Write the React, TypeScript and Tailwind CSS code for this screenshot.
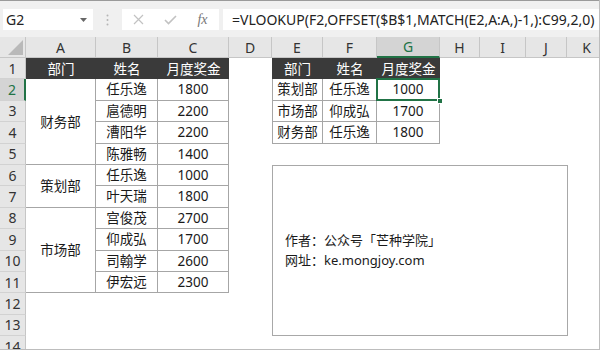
import React from 'react';

type Kind = 'empty' | 'head' | 'body' | 'sel';
interface Cell {
  text?: string;
  kind: Kind;
  span?: 2 | 4;
  edge?: boolean;
}

const COLS = ['A', 'B', 'C', 'D', 'E', 'F', 'G', 'H', 'I', 'J', 'K'];
const FONT = "font-['Noto_Sans','Noto_Sans_CJK_SC',sans-serif]";

const e = (n: number): Cell[] => Array.from({ length: n }, () => ({ kind: 'empty' as Kind }));
const b = (text: string, extra: Partial<Cell> = {}): Cell => ({ text, kind: 'body', ...extra });
const h = (text: string): Cell => ({ text, kind: 'head' });

const ROWS: Cell[][] = [
  [h('部门'), h('姓名'), h('月度奖金'), ...e(1), h('部门'), h('姓名'), h('月度奖金'), ...e(4)],
  [b('财务部', { span: 4 }), b('任乐逸'), b('1800'), ...e(1), b('策划部', { edge: true }), b('任乐逸'), { text: '1000', kind: 'sel' }, ...e(4)],
  [b('扈德明'), b('2200'), ...e(1), b('市场部', { edge: true }), b('仰成弘'), b('1700'), ...e(4)],
  [b('漕阳华'), b('2200'), ...e(1), b('财务部', { edge: true }), b('任乐逸'), b('1800'), ...e(4)],
  [b('陈雅畅'), b('1400'), ...e(8)],
  [b('策划部', { span: 2 }), b('任乐逸'), b('1000'), ...e(8)],
  [b('叶天瑞'), b('1800'), ...e(8)],
  [b('市场部', { span: 4 }), b('宫俊茂'), b('2700'), ...e(8)],
  [b('仰成弘'), b('1700'), ...e(8)],
  [b('司翰学'), b('2600'), ...e(8)],
  [b('伊宏远'), b('2300'), ...e(8)],
  e(11),
  e(11),
  e(11),
];

function GridCell({ cell }: { cell: Cell }) {
  const span = cell.span === 4 ? 'row-span-4' : cell.span === 2 ? 'row-span-2' : '';
  if (cell.kind === 'empty') return <div className="bg-white" />;
  if (cell.kind === 'head') {
    return (
      <div className="flex items-center justify-center bg-[#3a3a3a] text-[13.5px] text-white">
        {cell.text}
      </div>
    );
  }
  if (cell.kind === 'sel') {
    return (
      <div className="relative flex items-center justify-center border-b border-r border-[#a6a6a6] bg-white text-[13.5px] text-[#1a1a1a]">
        {cell.text}
        <div className="absolute -left-px -top-px -right-px -bottom-px border-2 border-[#217346]" />
        <div className="absolute -bottom-[4px] -right-[4px] h-[6px] w-[6px] border border-white bg-[#217346]" />
      </div>
    );
  }
  return (
    <div
      className={`flex items-center justify-center border-b border-r border-[#a6a6a6] bg-white text-[13.5px] text-[#1a1a1a] ${span} ${
        cell.edge ? 'border-l' : ''
      }`}
    >
      {cell.text}
    </div>
  );
}

function FormulaBar() {
  return (
    <div className="flex h-[37px] items-center gap-0 border-t border-[#9a9a9a] bg-[#f0f0f0] pt-[1px]">
      {/* Name box */}
      <div className="ml-[3px] flex h-[21px] w-[90px] items-center justify-between bg-white pl-[3px] pr-[6px] text-[14px] text-[#222]">
        <span>G2</span>
        <svg width="7" height="4" viewBox="0 0 7 4">
          <polygon points="0,0 7,0 3.5,4" fill="#666" />
        </svg>
      </div>
      {/* Separator */}
      <div className="flex w-[29px] justify-center">
        <svg width="3" height="12" viewBox="0 0 3 12">
          <circle cx="1.5" cy="1.5" r="1" fill="#b5b5b5" />
          <circle cx="1.5" cy="6" r="1" fill="#b5b5b5" />
          <circle cx="1.5" cy="10.5" r="1" fill="#b5b5b5" />
        </svg>
      </div>
      {/* Buttons */}
      <div className="flex h-[21px] w-[97px] items-center bg-white">
        <div className="flex w-[32px] justify-center">
          <svg width="11" height="11" viewBox="0 0 11 11">
            <path d="M1 1 L10 10 M10 1 L1 10" stroke="#c2c2c2" strokeWidth="1.2" />
          </svg>
        </div>
        <div className="flex w-[32px] justify-center">
          <svg width="13" height="10" viewBox="0 0 13 10">
            <path d="M1 5 L4.5 8.5 L12 1" stroke="#c2c2c2" strokeWidth="1.6" fill="none" />
          </svg>
        </div>
        <div className="flex w-[33px] justify-center font-['Liberation_Serif',serif] text-[14px] italic text-[#777]">
          fx
        </div>
      </div>
      {/* Formula input */}
      <div className="ml-[4px] flex h-[21px] flex-1 items-center bg-white pl-[9px] text-[14px] text-[#222]">
        =VLOOKUP(F2,OFFSET($B$1,MATCH(E2,A:A,)-1,):C99,2,0)
      </div>
    </div>
  );
}

export default function App() {
  return (
    <div className={`relative h-[350px] w-[600px] overflow-hidden border-b border-r border-[#bdbdbd] bg-white ${FONT}`}>
      <FormulaBar />
      <div className="grid grid-cols-[26px_70px_62px_71px_43px_51px_54px_63px_40px_46px_41px_40px] grid-rows-[21px] auto-rows-[21.4px]">
        {/* corner */}
        <div className="flex items-end justify-end border-b border-r border-[#c6c6c6] bg-[#e6e6e6] pb-[1px] pr-[1px]">
          <svg width="17" height="16" viewBox="0 0 17 16">
            <polygon points="16,0 16,15 1,15" fill="#b9b9b9" />
          </svg>
        </div>
        {COLS.map((c) => (
          <div
            key={c}
            className={`flex items-center justify-center border-r text-[14px] ${
              c === 'G'
                ? 'border-b-2 border-r-[#c6c6c6] border-b-[#217346] bg-[#d4d4d4] text-[#217346]'
                : 'border-b border-[#c6c6c6] bg-[#e6e6e6] text-[#333]'
            }`}
          >
            {c}
          </div>
        ))}
        {ROWS.map((row, i) => (
          <React.Fragment key={i}>
            <div
              className={`flex items-center justify-center border-b border-b-[#d2d2d2] text-[14px] ${
                i === 1
                  ? 'border-r-2 border-r-[#217346] bg-[#d4d4d4] text-[#217346]'
                  : 'border-r border-r-[#c6c6c6] bg-[#e6e6e6] text-[#333]'
              }`}
            >
              {i + 1}
            </div>
            {row.map((cell, j) => (
              <GridCell key={j} cell={cell} />
            ))}
          </React.Fragment>
        ))}
      </div>
      {/* floating text box */}
      <div className="absolute left-[272px] top-[165px] flex h-[171px] w-[296px] flex-col justify-center border border-[#a8a8a8] bg-white pl-[12px] text-[13px] leading-[19.5px] text-[#1a1a1a]">
        <div>作者：公众号「芒种学院」</div>
        <div>网址：ke.mongjoy.com</div>
      </div>
    </div>
  );
}
